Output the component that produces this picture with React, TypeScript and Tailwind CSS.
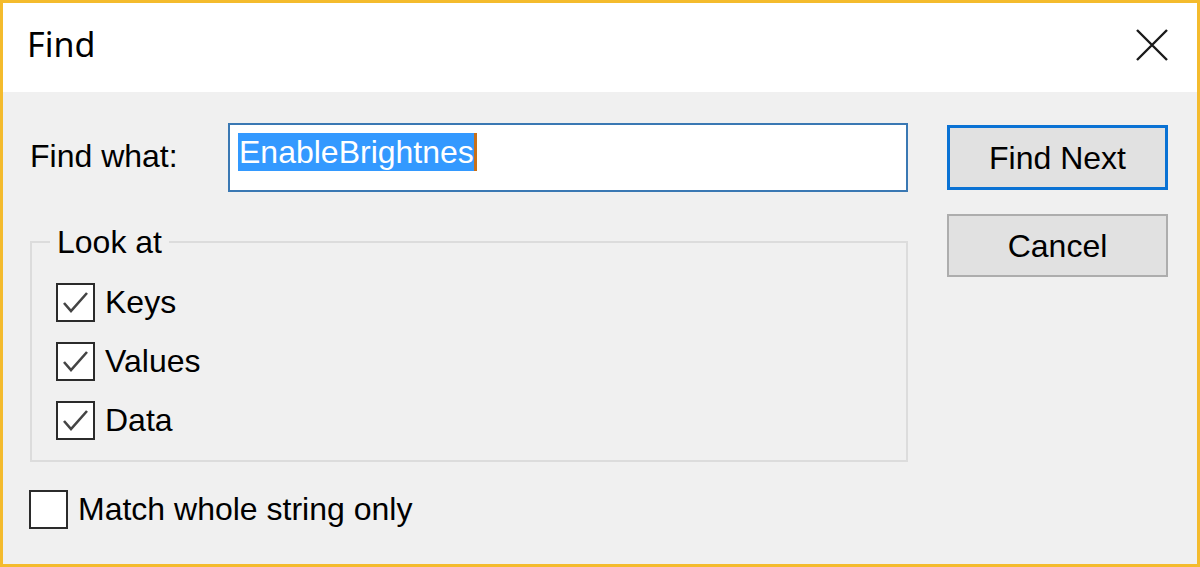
import React, { FC } from "react";

const font = { fontFamily: '"Liberation Sans", Arial, sans-serif' };

interface CheckProps {
  label: string;
  checked: boolean;
}

const CheckRow: FC<CheckProps> = (props: CheckProps) => {
  return (
    <div className="flex items-center h-[40px]">
      <div className="w-[39px] h-[39px] border-2 border-[#2b2b2b] bg-white flex items-center justify-center shrink-0">
        {props.checked ? (
          <svg width="35" height="35" viewBox="0 0 35 35">
            <polyline
              points="6,18 13,26 29,8"
              fill="none"
              stroke="#444444"
              strokeWidth="2.6"
            />
          </svg>
        ) : null}
      </div>
      <span className="ml-[10px] text-[32px] leading-[36px] text-black">
        {props.label}
      </span>
    </div>
  );
};

export default function App() {
  return (
    <div
      className="w-[1200px] h-[567px] border-[3px] border-[#f4bb2d] flex flex-col bg-[#f0f0f0] overflow-hidden"
      style={font}
    >
      {/* title bar */}
      <div className="h-[89px] bg-white flex justify-between items-start shrink-0">
        <div
          className="ml-[24px] mt-[23px] text-[34px] leading-[36px] text-black"
          style={{ fontFamily: '"Noto Sans", "Open Sans", sans-serif' }}
        >
          Find
        </div>
        <div className="mt-[26px] mr-[29px]">
          <svg width="32" height="32" viewBox="0 0 32 32">
            <path d="M1 1 L31 31 M31 1 L1 31" stroke="#1a1a1a" strokeWidth="2.4" />
          </svg>
        </div>
      </div>

      {/* body */}
      <div className="flex-1 flex pl-[27px] pt-[31px] gap-[39px]">
        <div className="w-[878px] flex flex-col">
          <div className="flex items-center h-[69px]">
            <div className="w-[198px] text-[32px] leading-[36px] text-black -mt-[4px]">
              Find what:
            </div>
            <div className="w-[680px] h-[69px] border-2 border-[#3a78b3] bg-white pl-[8px] pt-[8px] flex items-start">
              <span className="bg-[#3399ff] text-white text-[32px] leading-[38px] h-[38px] pl-[1px]">
                EnableBrightnes
              </span>
              <span className="w-[3px] h-[38px] bg-[#c8701a]"></span>
            </div>
          </div>

          <fieldset className="mt-[32px] border-2 border-[#dcdcdc] pl-[18px] pb-[20px]">
            <legend className="px-[7px] text-[32px] leading-[36px] text-black">
              Look at
            </legend>
            <div className="pl-[6px] pt-[22px] flex flex-col gap-[19px]">
              <CheckRow label="Keys" checked={true} />
              <CheckRow label="Values" checked={true} />
              <CheckRow label="Data" checked={true} />
            </div>
          </fieldset>

          <div className="mt-[27px] -ml-px">
            <CheckRow label="Match whole string only" checked={false} />
          </div>
        </div>

        <div className="w-[221px] pt-[2px] flex flex-col gap-[24px]">
          <button className="h-[65px] w-full border-[3px] border-[#0a72d4] bg-[#e1e1e1] text-[32px] leading-[36px] text-black">
            Find Next
          </button>
          <button className="h-[63px] w-full border-2 border-[#adadad] bg-[#e1e1e1] text-[32px] leading-[36px] text-black">
            Cancel
          </button>
        </div>
      </div>
    </div>
  );
}
